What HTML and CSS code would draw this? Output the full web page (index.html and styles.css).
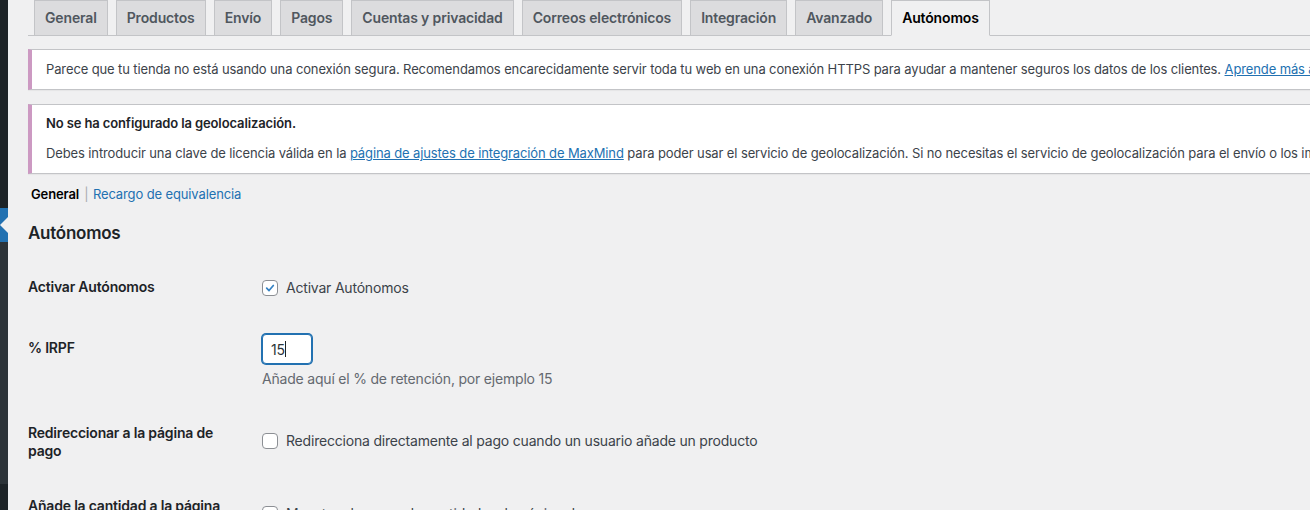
FILE: index.html
```html
<!DOCTYPE html>
<html lang="es">
<head>
<meta charset="utf-8">
<title>Ajustes – Autónomos</title>
<link rel="stylesheet" href="styles.css">
</head>
<body>
<div class="admin-menu">
  <div class="menu-top"></div>
  <div class="menu-current"><span class="menu-arrow"></span></div>
  <div class="menu-sub"></div>
  <div class="menu-bottom"></div>
</div>
<main class="wrap">
  <nav class="nav-tabs">
    <a class="nav-tab">General</a>
    <a class="nav-tab">Productos</a>
    <a class="nav-tab">Envío</a>
    <a class="nav-tab">Pagos</a>
    <a class="nav-tab">Cuentas y privacidad</a>
    <a class="nav-tab">Correos electrónicos</a>
    <a class="nav-tab">Integración</a>
    <a class="nav-tab">Avanzado</a>
    <a class="nav-tab nav-tab-active">Autónomos</a>
  </nav>

  <div class="notice notice-first">
    <p>Parece que tu tienda no está usando una conexión segura. Recomendamos encarecidamente servir toda tu web en una conexión HTTPS para ayudar a mantener seguros los datos de los clientes. <a href="#">Aprende más acerca de esto</a></p>
  </div>

  <div class="notice">
    <p><strong>No se ha configurado la geolocalización.</strong></p>
    <p>Debes introducir una clave de licencia válida en la <a href="#">página de ajustes de integración de MaxMind</a> para poder usar el servicio de geolocalización. Si no necesitas el servicio de geolocalización para el envío o los impuestos, deberías cambiar la opción de ubicación predeterminada del cliente.</p>
  </div>

  <ul class="subsubsub">
    <li><span class="current">General</span></li>
    <li><span class="sep">|</span> <a href="#">Recargo de equivalencia</a></li>
  </ul>

  <h2 class="section-title">Autónomos</h2>

  <table class="form-table">
    <tr class="row-check">
      <th>Activar Autónomos</th>
      <td>
        <label class="check-label"><span class="checkbox checked"><svg viewBox="0 0 16 16" width="16" height="16"><path d="M4.2 8.2 L6.9 10.9 L11.8 5.2" fill="none" stroke="#3582c4" stroke-width="2" stroke-linecap="round" stroke-linejoin="round"/></svg></span>Activar Autónomos</label>
      </td>
    </tr>
    <tr class="row-input">
      <th>% IRPF</th>
      <td>
        <div class="input-wrap">
          <input class="text-input" type="text" value="15">
          <span class="caret"></span>
        </div>
        <p class="description">Añade aquí el % de retención, por ejemplo 15</p>
      </td>
    </tr>
    <tr class="row-two">
      <th>Redireccionar a la página de pago</th>
      <td>
        <label class="check-label"><span class="checkbox"></span>Redirecciona directamente al pago cuando un usuario añade un producto</label>
      </td>
    </tr>
    <tr class="row-two">
      <th>Añade la cantidad a la página de pago</th>
      <td>
        <label class="check-label"><span class="checkbox"></span>Muestra el campo de cantidad en la página de pago</label>
      </td>
    </tr>
  </table>
</main>
</body>
</html>
```

FILE: styles.css
```css
html, body {
  margin: 0;
  padding: 0;
  height: 510px;
  overflow: hidden;
}

body {
  background: #f0f0f1;
  font-family: Inter, "Liberation Sans", sans-serif;
  color: #3c434a;
  font-size: 13px;
  letter-spacing: -0.12px;
  display: flex;
  align-items: flex-start;
}

/* Admin sidebar (cropped) */
.admin-menu {
  width: 8px;
  flex: 0 0 8px;
  display: flex;
  flex-direction: column;
  height: 510px;
}
.menu-top { height: 208px; background: #1d2327; }
.menu-current {
  height: 34px;
  background: #2271b1;
  position: relative;
}
.menu-arrow {
  position: absolute;
  right: 0;
  top: 50%;
  margin-top: -8px;
  width: 0;
  height: 0;
  border: 8px solid transparent;
  border-left-width: 0;
  border-right-color: #f0f0f1;
}
.menu-sub { height: 242px; background: #2c3338; }
.menu-bottom { flex: 1; background: #1d2327; }

.wrap {
  flex: 1;
  padding-left: 20px;
  min-width: 0;
}

/* Tabs */
.nav-tabs {
  display: flex;
  border-bottom: 1px solid #c3c4c7;
  padding-left: 6px;
  white-space: nowrap;
  margin-right: -40px;
}
.nav-tab {
  display: block;
  margin-right: 8px;
  margin-bottom: -1px;
  padding: 5px 10px;
  border: 1px solid #c3c4c7;
  background: #dcdcde;
  color: #50575e;
  font-size: 14px;
  letter-spacing: -0.15px;
  line-height: 24px;
  font-weight: 600;
  text-decoration: none;
}
.nav-tab-active {
  background: #f0f0f1;
  border-bottom-color: #f0f0f1;
  color: #000;
}

/* Notices */
.notice {
  background: #fff;
  border: 1px solid #c3c4c7;
  border-left: 4px solid #cc99c2;
  box-shadow: 0 1px 1px rgba(0,0,0,.04);
  padding: 1px 12px;
  margin: 14px -200px 0 0;
}
.notice p {
  margin: 6.5px 0;
  padding: 2px;
  line-height: 19.5px;
  white-space: nowrap;
  font-size: 13px;
}
.notice strong { color: #1d2327; font-weight: 600; }
.notice a { color: #2271b1; }
.notice-first { margin-top: 13px; }

/* Sub nav */
.subsubsub {
  list-style: none;
  margin: 7px 0 0;
  padding: 0 0 0 3px;
  display: flex;
  gap: 5px;
  font-size: 13px;
  line-height: 26px;
}
.subsubsub .current { color: #000; font-weight: 600; }
.subsubsub .sep { color: #a7aaad; margin-right: 1px; }
.subsubsub a { color: #2271b1; text-decoration: none; }

.section-title {
  font-size: 17px;
  letter-spacing: -0.25px;
  font-weight: 600;
  color: #1d2327;
  margin: 15px 0 0;
  line-height: 22px;
}

/* Form table */
.form-table {
  border-collapse: collapse;
  margin-top: 14px;
  width: 100%;
}
.form-table th {
  width: 200px;
  text-align: left;
  vertical-align: top;
  padding: 20px 24px 20px 0;
  font-size: 14px;
  letter-spacing: -0.2px;
  line-height: 18px;
  font-weight: 600;
  color: #1d2327;
}
.form-table td {
  vertical-align: middle;
  padding: 15px 10px;
  font-size: 14px;
  letter-spacing: -0.2px;
  line-height: 21px;
  color: #3c434a;
}
.row-check th { padding-bottom: 23px; }
.row-check td { vertical-align: top; padding-top: 19px; }
.row-two th { padding-bottom: 17px; }

.check-label {
  display: flex;
  align-items: center;
  gap: 8px;
}
.checkbox {
  width: 16px;
  height: 16px;
  box-sizing: border-box;
  border: 1px solid #8c8f94;
  border-radius: 4px;
  background: #fff;
  display: flex;
  align-items: center;
  justify-content: center;
  flex: 0 0 16px;
}
.checkbox svg { display: block; }

.input-wrap {
  position: relative;
  width: 50px;
  height: 30px;
}
.text-input {
  box-sizing: border-box;
  width: 50px;
  height: 30px;
  margin: 0;
  padding: 0 8px;
  border: 1px solid #2271b1;
  box-shadow: 0 0 0 1px #2271b1;
  border-radius: 4px;
  font-family: inherit;
  font-size: 14px;
  letter-spacing: -0.2px;
  color: #2c3338;
  background: #fff;
  outline: none;
}
.caret {
  position: absolute;
  left: 23px;
  top: 7px;
  width: 1px;
  height: 16px;
  background: #1d2327;
}
.description {
  margin: 4px 0 0;
  color: #646970;
  font-size: 14px;
  line-height: 21px;
}
```
